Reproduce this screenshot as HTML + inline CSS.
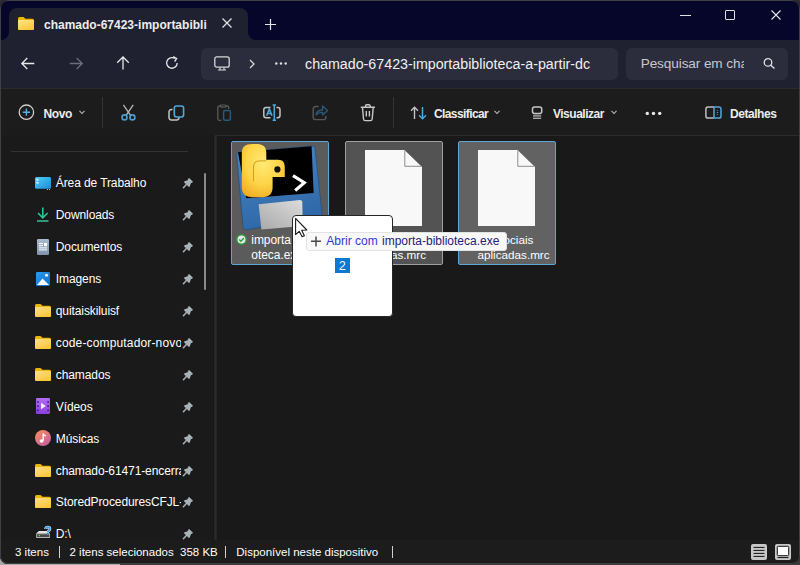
<!DOCTYPE html>
<html><head><meta charset="utf-8"><style>
*{margin:0;padding:0;box-sizing:border-box}
html,body{width:800px;height:565px;overflow:hidden;background:#2a2a2a;font-family:"Liberation Sans",sans-serif;color:#fff}
.abs{position:absolute}
.t{position:absolute;white-space:nowrap}
svg{position:absolute;overflow:visible}
</style></head><body>
<div class="abs" style="left:0;top:0;width:800px;height:565px;background:#3a3a3a"></div>
<div class="abs" style="left:0;top:0;width:800px;height:40px;background:#2e2e2e"></div>
<div class="abs" style="left:0;top:120px;width:2px;height:445px;background:linear-gradient(#3c4250,#4a4e58 70%,#a8a8a8 78%)"></div>
<div class="abs" style="left:0;top:556px;width:120px;height:9px;background:#a8a8a8"></div>
<div class="abs" id="win" style="left:0;top:0;width:800px;height:564px;border-radius:8px;overflow:hidden;background:#191919">
<div class="abs" style="left:0;top:0;width:800px;height:40px;background:#05062a"></div>
<div class="abs" style="left:9px;top:8px;width:239px;height:33px;background:#1f2030;border-radius:8px 8px 0 0"></div>
<svg style="left:1px;top:32px" width="8" height="8"><path d="M8 0 V8 H0 A8 8 0 0 0 8 0Z" fill="#1f2030"/></svg>
<svg style="left:248px;top:32px" width="8" height="8"><path d="M0 0 V8 H8 A8 8 0 0 1 0 0Z" fill="#1f2030"/></svg>
<div class="abs" style="left:0;top:40px;width:800px;height:48px;background:#1f2030"></div>
<div class="abs" style="left:201px;top:48px;width:417px;height:32px;background:#2b2c3c;border-radius:6px"></div>
<div class="abs" style="left:626px;top:48px;width:162px;height:32px;background:#2b2c3c;border-radius:6px"></div>
<div class="abs" style="left:0;top:88px;width:800px;height:47px;background:#1c1c1c;border-top:1px solid #2b2b2b"></div>
<div class="abs" style="left:0;top:135px;width:800px;height:1px;background:#2c2c2c"></div>
<div class="abs" style="left:102px;top:97px;width:1px;height:31px;background:#333"></div>
<div class="abs" style="left:393px;top:97px;width:1px;height:31px;background:#333"></div>
<div class="abs" style="left:0;top:135px;width:215px;height:405px;background:#1a1a1a"></div>
<div class="abs" style="left:11px;top:151px;width:177px;height:1px;background:#333"></div>
<div class="abs" style="left:213px;top:136px;width:1px;height:404px;background:#161616"></div>
<div class="abs" style="left:214px;top:136px;width:3px;height:404px;background:linear-gradient(90deg,#242424,#2b2b2b,#232323)"></div>
<div class="abs" style="left:204px;top:173px;width:2px;height:117px;background:#8a8a8a;border-radius:1px"></div>
<div class="abs" style="left:0;top:540px;width:800px;height:25px;background:#1c1c1c"></div>
<svg style="left:18px;top:17px" width="16" height="13" viewBox="0 0 16 13"><path d="M0 1.5 Q0 0 1.5 0 H5.5 L7.5 1.8 H14.5 Q16 1.8 16 3.3 V11.5 Q16 13 14.5 13 H1.5 Q0 13 0 11.5Z" fill="#f2b600"/><defs><linearGradient id="gft" x1="0" y1="0" x2="0.6" y2="1"><stop offset="0" stop-color="#ffe592"/><stop offset="1" stop-color="#fcc63a"/></linearGradient></defs><path d="M0 4 Q0 3 1.2 3 H14.8 Q16 3 16 4.2 V11.5 Q16 13 14.5 13 H1.5 Q0 13 0 11.5Z" fill="url(#gft)"/></svg>
<div class="t" style="left:44px;top:18.54px;font-size:12px;line-height:12px;color:#ececec;font-weight:700;letter-spacing:0px;">chamado-67423-importabibli</div>

<svg style="left:222px;top:18px" width="10" height="10"><path d="M0.5 0.5 L9.5 9.5 M9.5 0.5 L0.5 9.5" stroke="#e6e6e6" stroke-width="1.2"/></svg>
<svg style="left:265px;top:19px" width="11" height="11"><path d="M5.5 0 V11 M0 5.5 H11" stroke="#e6e6e6" stroke-width="1.2"/></svg>
<div class="abs" style="left:680px;top:15px;width:11px;height:1px;background:#e0e0e0"></div>
<div class="abs" style="left:725px;top:10px;width:10px;height:10px;border:1px solid #e0e0e0;border-radius:1px"></div>
<svg style="left:771px;top:10px" width="10" height="10"><path d="M0.5 0.5 L9.5 9.5 M9.5 0.5 L0.5 9.5" stroke="#e6e6e6" stroke-width="1.1"/></svg>
<svg style="left:21px;top:57px" width="14" height="13"><path d="M13.3 6.5 H1 M6.3 1 L0.8 6.5 L6.3 12" stroke="#e8e8e8" stroke-width="1.3" fill="none"/></svg>
<svg style="left:69px;top:57px" width="14" height="13"><path d="M0.7 6.5 H13 M7.7 1 L13.2 6.5 L7.7 12" stroke="#6e6e78" stroke-width="1.3" fill="none"/></svg>
<svg style="left:116px;top:56px" width="14" height="14"><path d="M7 13.5 V1 M1.2 6.8 L7 1 L12.8 6.8" stroke="#e8e8e8" stroke-width="1.3" fill="none"/></svg>
<svg style="left:165px;top:56px" width="14" height="14"><path d="M12.2 7 A5.3 5.3 0 1 1 9.8 2.5" stroke="#e8e8e8" stroke-width="1.3" fill="none"/><path d="M8.2 0.6 L11.6 2.4 L9.6 5.6" stroke="#e8e8e8" stroke-width="1.3" fill="none"/></svg>
<svg style="left:214px;top:56px" width="16" height="16"><rect x="0.8" y="0.8" width="14.4" height="10.4" rx="2" stroke="#d8d8d8" stroke-width="1.3" fill="none"/><path d="M6 11.5 V13.5 M10 11.5 V13.5 M4 14 H12" stroke="#d8d8d8" stroke-width="1.2"/></svg>
<svg style="left:249px;top:59px" width="7" height="10"><path d="M1 1 L5 5 L1 9" stroke="#d8d8d8" stroke-width="1.3" fill="none"/></svg>
<svg style="left:275px;top:62px" width="12" height="3"><circle cx="1.3" cy="1.5" r="1.2" fill="#e0e0e0"/><circle cx="6" cy="1.5" r="1.2" fill="#e0e0e0"/><circle cx="10.7" cy="1.5" r="1.2" fill="#e0e0e0"/></svg>
<div class="t" style="left:305px;top:56.94px;font-size:14.25px;line-height:14.25px;color:#f0f0f0;font-weight:400;letter-spacing:0px;">chamado-67423-importabiblioteca-a-partir-dc</div>

<div class="abs" style="left:0;top:0;width:744px;height:90px;overflow:hidden"><div class="t" style="left:640.7px;top:57.49px;font-size:13.6px;line-height:13.6px;color:#c8c8cc;font-weight:400;letter-spacing:-0.1px;">Pesquisar em cha</div>
</div>
<svg style="left:763px;top:58.2px" width="13" height="11"><circle cx="5" cy="4.4" r="3.8" stroke="#e0e0e0" stroke-width="1.3" fill="none"/><path d="M7.8 7.2 L11.5 10.5" stroke="#e0e0e0" stroke-width="1.4"/></svg>
<svg style="left:18px;top:104px" width="17" height="17"><circle cx="8.4" cy="8.2" r="7.2" stroke="#d0d0d0" stroke-width="1.3" fill="none"/><path d="M8.4 4.6 V11.8 M4.8 8.2 H12" stroke="#4fb4ec" stroke-width="1.4"/></svg>
<div class="t" style="left:43.5px;top:107.84px;font-size:12px;line-height:12px;color:#ececec;font-weight:700;letter-spacing:-0.4px;">Novo</div>

<svg style="left:79px;top:109.8px" width="6" height="5"><path d="M0.5 0.8 L3 3.5 L5.5 0.8" stroke="#bbb" stroke-width="1.1" fill="none"/></svg>
<svg style="left:121px;top:104px" width="16" height="18"><path d="M2.4 0.9 L9.6 11.4 M12.2 0.9 L5.1 11.4" stroke="#b8b8b8" stroke-width="1.3"/><circle cx="3.5" cy="13.4" r="2.5" stroke="#4b9fd0" stroke-width="1.6" fill="none"/><circle cx="11.4" cy="13.4" r="2.5" stroke="#4b9fd0" stroke-width="1.6" fill="none"/></svg>
<svg style="left:168px;top:104px" width="17" height="17"><path d="M4.5 5.5 H3.3 A2.3 2.3 0 0 0 1 7.8 V13.6 A2.3 2.3 0 0 0 3.3 15.9 H8.8 A2.3 2.3 0 0 0 11.1 13.6 V13.2" stroke="#c4c4c4" stroke-width="1.5" fill="none"/><rect x="6.3" y="2" width="9.3" height="11" rx="2.2" stroke="#4fa8dc" stroke-width="1.6" fill="none"/></svg>
<svg style="left:217px;top:104px" width="16" height="18"><path d="M3.3 2 H2.3 A1.5 1.5 0 0 0 0.8 3.5 V14.8 A1.5 1.5 0 0 0 2.3 16.3 H4.3 M8.9 2 H10.2 A1.5 1.5 0 0 1 11.7 3.5 V5" stroke="#5a5a5a" stroke-width="1.3" fill="none"/><rect x="3.3" y="1" width="5.6" height="2.1" rx="1" stroke="#5a5a5a" stroke-width="1.2" fill="none"/><rect x="6.6" y="6.4" width="6.8" height="9.8" rx="1.5" stroke="#2a5a7a" stroke-width="1.5" fill="none"/></svg>
<svg style="left:263px;top:104px" width="18" height="18"><path d="M7.5 3.5 H3 A2.2 2.2 0 0 0 0.8 5.7 V11.6 A2.2 2.2 0 0 0 3 13.8 H7.5 M13.5 3.5 H14.8 A2.2 2.2 0 0 1 17 5.7 V11.6 A2.2 2.2 0 0 1 14.8 13.8 H13.5" stroke="#c4c4c4" stroke-width="1.5" fill="none"/><path d="M3.6 11.8 L6.3 5 L9 11.8 M4.6 9.5 H8" stroke="#4fa8dc" stroke-width="1.6" fill="none"/><path d="M11.3 1 V16.3 M9.6 1 H13 M9.6 16.3 H13" stroke="#4fa8dc" stroke-width="1.5"/></svg>
<svg style="left:312px;top:105px" width="17" height="16"><path d="M6.6 1.5 H3.5 A2.3 2.3 0 0 0 1.2 3.8 V12.3 A2.3 2.3 0 0 0 3.5 14.6 H11.6 A2.3 2.3 0 0 0 13.9 12.3 V10.9" stroke="#585858" stroke-width="1.4" fill="none"/><path d="M4 9.9 Q4.5 5.4 10.5 5 V1 L15.6 5.6 L10.7 10 V7.4 Q6.2 7.4 4 9.9Z" stroke="#2a5878" stroke-width="1.3" fill="none" stroke-linejoin="round"/></svg>
<svg style="left:360px;top:104px" width="16" height="18"><path d="M0.8 3.3 H15 M5.5 3.3 V2 A1.2 1.2 0 0 1 6.7 0.8 H9 A1.2 1.2 0 0 1 10.2 2 V3.3 M2.5 3.5 L3.5 15 A1.8 1.8 0 0 0 5.3 16.6 H10.4 A1.8 1.8 0 0 0 12.2 15 L13.2 3.5" stroke="#c8c8c8" stroke-width="1.4" fill="none"/><path d="M6.3 7 V12.5 M9.4 7 V12.5" stroke="#c8c8c8" stroke-width="1.4"/></svg>
<svg style="left:410px;top:106px" width="18" height="14"><path d="M4.5 13 V1.3 M1 4.8 L4.5 1.3 L8 4.8" stroke="#c4c4c4" stroke-width="1.4" fill="none"/><path d="M12.5 1 V12.7 M9 9.2 L12.5 12.7 L16 9.2" stroke="#4fa8dc" stroke-width="1.5" fill="none"/></svg>
<div class="t" style="left:434px;top:107.84px;font-size:12px;line-height:12px;color:#ececec;font-weight:700;letter-spacing:-0.6px;">Classificar</div>

<svg style="left:494px;top:109.8px" width="6" height="5"><path d="M0.5 0.8 L3 3.5 L5.5 0.8" stroke="#bbb" stroke-width="1.1" fill="none"/></svg>
<svg style="left:531px;top:106px" width="12" height="13"><rect x="1.5" y="0.9" width="9.2" height="6.6" rx="2" stroke="#c8c8c8" stroke-width="1.5" fill="none"/><path d="M2 9.3 H10.2 M2 10.9 H10.2 M2 12.5 H10.2" stroke="#a8a8a8" stroke-width="1"/></svg>
<div class="t" style="left:553px;top:107.84px;font-size:12px;line-height:12px;color:#ececec;font-weight:700;letter-spacing:-0.5px;">Visualizar</div>

<svg style="left:611px;top:109.8px" width="6" height="5"><path d="M0.5 0.8 L3 3.5 L5.5 0.8" stroke="#bbb" stroke-width="1.1" fill="none"/></svg>
<svg style="left:645px;top:111px" width="18" height="4"><circle cx="2.3" cy="2.4" r="1.7" fill="#ececec"/><circle cx="8.5" cy="2.4" r="1.7" fill="#ececec"/><circle cx="14.7" cy="2.4" r="1.7" fill="#ececec"/></svg>
<svg style="left:705px;top:106px" width="17" height="13"><path d="M9 0.9 H3 A2.2 2.2 0 0 0 0.9 3.1 V9.9 A2.2 2.2 0 0 0 3 12.1 H9" stroke="#bdbdbd" stroke-width="1.5" fill="none"/><path d="M9 0.9 H13.8 A2.2 2.2 0 0 1 16 3.1 V9.9 A2.2 2.2 0 0 1 13.8 12.1 H9 Z" stroke="#4fa8dc" stroke-width="1.5" fill="none"/><path d="M12.5 4 V4.8 M12.5 6.1 V6.9 M12.5 8.2 V9" stroke="#4fa8dc" stroke-width="1.2"/></svg>
<div class="t" style="left:730px;top:107.84px;font-size:12px;line-height:12px;color:#ececec;font-weight:700;letter-spacing:-0.45px;">Detalhes</div>

<div class="t" style="left:55.8px;top:177.44px;font-size:12px;line-height:12px;color:#fff;font-weight:400;letter-spacing:-0.1px;">Área de Trabalho</div>

<div class="t" style="left:55.8px;top:209.44px;font-size:12px;line-height:12px;color:#fff;font-weight:400;letter-spacing:-0.1px;">Downloads</div>

<div class="t" style="left:55.8px;top:241.44px;font-size:12px;line-height:12px;color:#fff;font-weight:400;letter-spacing:-0.1px;">Documentos</div>

<div class="t" style="left:55.8px;top:273.44px;font-size:12px;line-height:12px;color:#fff;font-weight:400;letter-spacing:-0.1px;">Imagens</div>

<div class="t" style="left:55.8px;top:305.44px;font-size:12px;line-height:12px;color:#fff;font-weight:400;letter-spacing:-0.1px;">quitaiskiluisf</div>

<div class="t" style="left:55.8px;top:337.44px;font-size:12px;line-height:12px;color:#fff;font-weight:400;letter-spacing:0.15px;">code-computador-novo</div>

<div class="t" style="left:55.8px;top:368.94px;font-size:12px;line-height:12px;color:#fff;font-weight:400;letter-spacing:-0.1px;">chamados</div>

<div class="t" style="left:55.8px;top:400.94px;font-size:12px;line-height:12px;color:#fff;font-weight:400;letter-spacing:-0.1px;">Vídeos</div>

<div class="t" style="left:55.8px;top:432.94px;font-size:12px;line-height:12px;color:#fff;font-weight:400;letter-spacing:-0.1px;">Músicas</div>

<div class="t" style="left:55.8px;top:464.94px;font-size:12px;line-height:12px;color:#fff;font-weight:400;letter-spacing:-0.1px;">chamado-61471-encerra</div>

<div class="t" style="left:55.8px;top:496.44px;font-size:12px;line-height:12px;color:#fff;font-weight:400;letter-spacing:-0.1px;">StoredProceduresCFJL-t</div>

<div class="t" style="left:55.8px;top:528.44px;font-size:12px;line-height:12px;color:#fff;font-weight:400;letter-spacing:-0.1px;">D:\</div>

<div class="abs" style="left:181px;top:330px;width:22px;height:190px;background:#1a1a1a"></div>
<svg style="left:180px;top:175px" width="16" height="16" viewBox="0 0 16 16"><path d="M8.6 3.2 Q9 2.9 9.4 3.2 L12.8 6.6 Q13.1 7 12.7 7.3 L10.9 8.3 L9.6 11.8 Q9.3 12.3 8.9 11.9 L4 7.2 Q3.6 6.8 4.1 6.5 L7.5 5.2Z" fill="#a6b1b8"/><path d="M6.4 9.6 L3.4 12.7" stroke="#a6b1b8" stroke-width="1.5" stroke-linecap="round"/></svg>
<svg style="left:180px;top:207px" width="16" height="16" viewBox="0 0 16 16"><path d="M8.6 3.2 Q9 2.9 9.4 3.2 L12.8 6.6 Q13.1 7 12.7 7.3 L10.9 8.3 L9.6 11.8 Q9.3 12.3 8.9 11.9 L4 7.2 Q3.6 6.8 4.1 6.5 L7.5 5.2Z" fill="#a6b1b8"/><path d="M6.4 9.6 L3.4 12.7" stroke="#a6b1b8" stroke-width="1.5" stroke-linecap="round"/></svg>
<svg style="left:180px;top:239px" width="16" height="16" viewBox="0 0 16 16"><path d="M8.6 3.2 Q9 2.9 9.4 3.2 L12.8 6.6 Q13.1 7 12.7 7.3 L10.9 8.3 L9.6 11.8 Q9.3 12.3 8.9 11.9 L4 7.2 Q3.6 6.8 4.1 6.5 L7.5 5.2Z" fill="#a6b1b8"/><path d="M6.4 9.6 L3.4 12.7" stroke="#a6b1b8" stroke-width="1.5" stroke-linecap="round"/></svg>
<svg style="left:180px;top:271px" width="16" height="16" viewBox="0 0 16 16"><path d="M8.6 3.2 Q9 2.9 9.4 3.2 L12.8 6.6 Q13.1 7 12.7 7.3 L10.9 8.3 L9.6 11.8 Q9.3 12.3 8.9 11.9 L4 7.2 Q3.6 6.8 4.1 6.5 L7.5 5.2Z" fill="#a6b1b8"/><path d="M6.4 9.6 L3.4 12.7" stroke="#a6b1b8" stroke-width="1.5" stroke-linecap="round"/></svg>
<svg style="left:180px;top:303px" width="16" height="16" viewBox="0 0 16 16"><path d="M8.6 3.2 Q9 2.9 9.4 3.2 L12.8 6.6 Q13.1 7 12.7 7.3 L10.9 8.3 L9.6 11.8 Q9.3 12.3 8.9 11.9 L4 7.2 Q3.6 6.8 4.1 6.5 L7.5 5.2Z" fill="#a6b1b8"/><path d="M6.4 9.6 L3.4 12.7" stroke="#a6b1b8" stroke-width="1.5" stroke-linecap="round"/></svg>
<svg style="left:180px;top:335px" width="16" height="16" viewBox="0 0 16 16"><path d="M8.6 3.2 Q9 2.9 9.4 3.2 L12.8 6.6 Q13.1 7 12.7 7.3 L10.9 8.3 L9.6 11.8 Q9.3 12.3 8.9 11.9 L4 7.2 Q3.6 6.8 4.1 6.5 L7.5 5.2Z" fill="#a6b1b8"/><path d="M6.4 9.6 L3.4 12.7" stroke="#a6b1b8" stroke-width="1.5" stroke-linecap="round"/></svg>
<svg style="left:180px;top:366.5px" width="16" height="16" viewBox="0 0 16 16"><path d="M8.6 3.2 Q9 2.9 9.4 3.2 L12.8 6.6 Q13.1 7 12.7 7.3 L10.9 8.3 L9.6 11.8 Q9.3 12.3 8.9 11.9 L4 7.2 Q3.6 6.8 4.1 6.5 L7.5 5.2Z" fill="#a6b1b8"/><path d="M6.4 9.6 L3.4 12.7" stroke="#a6b1b8" stroke-width="1.5" stroke-linecap="round"/></svg>
<svg style="left:180px;top:398.5px" width="16" height="16" viewBox="0 0 16 16"><path d="M8.6 3.2 Q9 2.9 9.4 3.2 L12.8 6.6 Q13.1 7 12.7 7.3 L10.9 8.3 L9.6 11.8 Q9.3 12.3 8.9 11.9 L4 7.2 Q3.6 6.8 4.1 6.5 L7.5 5.2Z" fill="#a6b1b8"/><path d="M6.4 9.6 L3.4 12.7" stroke="#a6b1b8" stroke-width="1.5" stroke-linecap="round"/></svg>
<svg style="left:180px;top:430.5px" width="16" height="16" viewBox="0 0 16 16"><path d="M8.6 3.2 Q9 2.9 9.4 3.2 L12.8 6.6 Q13.1 7 12.7 7.3 L10.9 8.3 L9.6 11.8 Q9.3 12.3 8.9 11.9 L4 7.2 Q3.6 6.8 4.1 6.5 L7.5 5.2Z" fill="#a6b1b8"/><path d="M6.4 9.6 L3.4 12.7" stroke="#a6b1b8" stroke-width="1.5" stroke-linecap="round"/></svg>
<svg style="left:180px;top:462.5px" width="16" height="16" viewBox="0 0 16 16"><path d="M8.6 3.2 Q9 2.9 9.4 3.2 L12.8 6.6 Q13.1 7 12.7 7.3 L10.9 8.3 L9.6 11.8 Q9.3 12.3 8.9 11.9 L4 7.2 Q3.6 6.8 4.1 6.5 L7.5 5.2Z" fill="#a6b1b8"/><path d="M6.4 9.6 L3.4 12.7" stroke="#a6b1b8" stroke-width="1.5" stroke-linecap="round"/></svg>
<svg style="left:180px;top:494px" width="16" height="16" viewBox="0 0 16 16"><path d="M8.6 3.2 Q9 2.9 9.4 3.2 L12.8 6.6 Q13.1 7 12.7 7.3 L10.9 8.3 L9.6 11.8 Q9.3 12.3 8.9 11.9 L4 7.2 Q3.6 6.8 4.1 6.5 L7.5 5.2Z" fill="#a6b1b8"/><path d="M6.4 9.6 L3.4 12.7" stroke="#a6b1b8" stroke-width="1.5" stroke-linecap="round"/></svg>
<svg style="left:180px;top:526px" width="16" height="16" viewBox="0 0 16 16"><path d="M8.6 3.2 Q9 2.9 9.4 3.2 L12.8 6.6 Q13.1 7 12.7 7.3 L10.9 8.3 L9.6 11.8 Q9.3 12.3 8.9 11.9 L4 7.2 Q3.6 6.8 4.1 6.5 L7.5 5.2Z" fill="#a6b1b8"/><path d="M6.4 9.6 L3.4 12.7" stroke="#a6b1b8" stroke-width="1.5" stroke-linecap="round"/></svg>
<svg style="left:35px;top:177px" width="16" height="13"><defs><linearGradient id="gd" x1="0" y1="0" x2="1" y2="1"><stop offset="0" stop-color="#4fd0f5"/><stop offset="1" stop-color="#1a8ad8"/></linearGradient></defs><rect x="0" y="0" width="16" height="11.8" rx="1.5" fill="url(#gd)"/><rect x="1.5" y="2" width="2" height="1.6" fill="#fff" opacity=".9"/><rect x="1.5" y="5" width="2" height="1.6" fill="#fff" opacity=".9"/><rect x="12" y="12" width="1" height="1" fill="#bbb"/><rect x="14" y="12" width="1" height="1" fill="#bbb"/></svg>
<svg style="left:37px;top:207px" width="12" height="15"><path d="M5.8 0.5 V10.5 M1 6 L5.8 10.8 L10.6 6" stroke="#2ec49a" stroke-width="1.6" fill="none"/><path d="M0 14 H11.5" stroke="#2ec49a" stroke-width="1.6"/></svg>
<svg style="left:37px;top:239px" width="12" height="16"><defs><linearGradient id="gdoc" x1="0" y1="0" x2="0" y2="1"><stop offset="0" stop-color="#a9bccf"/><stop offset="1" stop-color="#7d94ab"/></linearGradient></defs><rect x="0" y="0" width="12" height="16" rx="1.3" fill="url(#gdoc)"/><path d="M2 4.6 H6 M2 6.7 H6 M2 8.9 H10 M2 10.9 H10" stroke="#fff" stroke-width="1"/><rect x="7" y="4" width="3" height="3.2" fill="#fff"/></svg>
<svg style="left:36px;top:272px" width="14" height="14"><defs><linearGradient id="gim" x1="0" y1="0" x2="1" y2="1"><stop offset="0" stop-color="#2a9cf0"/><stop offset="1" stop-color="#0d6fcc"/></linearGradient></defs><rect x="0" y="0" width="14" height="14" rx="1.3" fill="url(#gim)"/><path d="M1 13 L6.5 6.5 L13 13Z" fill="#fff"/><circle cx="10.5" cy="3.3" r="1.5" fill="#fff"/></svg>
<svg style="left:35px;top:304px" width="16" height="13" viewBox="0 0 16 13"><path d="M0 1.5 Q0 0 1.5 0 H5.5 L7.5 1.8 H14.5 Q16 1.8 16 3.3 V11.5 Q16 13 14.5 13 H1.5 Q0 13 0 11.5Z" fill="#f2b600"/><defs><linearGradient id="gf0" x1="0" y1="0" x2="0.6" y2="1"><stop offset="0" stop-color="#ffe08a"/><stop offset="1" stop-color="#fcc63a"/></linearGradient></defs><path d="M0 4 Q0 3 1.2 3 H14.8 Q16 3 16 4.2 V11.5 Q16 13 14.5 13 H1.5 Q0 13 0 11.5Z" fill="url(#gf0)"/></svg>
<svg style="left:35px;top:336px" width="16" height="13" viewBox="0 0 16 13"><path d="M0 1.5 Q0 0 1.5 0 H5.5 L7.5 1.8 H14.5 Q16 1.8 16 3.3 V11.5 Q16 13 14.5 13 H1.5 Q0 13 0 11.5Z" fill="#f2b600"/><defs><linearGradient id="gf1" x1="0" y1="0" x2="0.6" y2="1"><stop offset="0" stop-color="#ffe08a"/><stop offset="1" stop-color="#fcc63a"/></linearGradient></defs><path d="M0 4 Q0 3 1.2 3 H14.8 Q16 3 16 4.2 V11.5 Q16 13 14.5 13 H1.5 Q0 13 0 11.5Z" fill="url(#gf1)"/></svg>
<svg style="left:35px;top:367.5px" width="16" height="13" viewBox="0 0 16 13"><path d="M0 1.5 Q0 0 1.5 0 H5.5 L7.5 1.8 H14.5 Q16 1.8 16 3.3 V11.5 Q16 13 14.5 13 H1.5 Q0 13 0 11.5Z" fill="#f2b600"/><defs><linearGradient id="gf2" x1="0" y1="0" x2="0.6" y2="1"><stop offset="0" stop-color="#ffe08a"/><stop offset="1" stop-color="#fcc63a"/></linearGradient></defs><path d="M0 4 Q0 3 1.2 3 H14.8 Q16 3 16 4.2 V11.5 Q16 13 14.5 13 H1.5 Q0 13 0 11.5Z" fill="url(#gf2)"/></svg>
<svg style="left:35px;top:463.5px" width="16" height="13" viewBox="0 0 16 13"><path d="M0 1.5 Q0 0 1.5 0 H5.5 L7.5 1.8 H14.5 Q16 1.8 16 3.3 V11.5 Q16 13 14.5 13 H1.5 Q0 13 0 11.5Z" fill="#f2b600"/><defs><linearGradient id="gf3" x1="0" y1="0" x2="0.6" y2="1"><stop offset="0" stop-color="#ffe08a"/><stop offset="1" stop-color="#fcc63a"/></linearGradient></defs><path d="M0 4 Q0 3 1.2 3 H14.8 Q16 3 16 4.2 V11.5 Q16 13 14.5 13 H1.5 Q0 13 0 11.5Z" fill="url(#gf3)"/></svg>
<svg style="left:35px;top:495px" width="16" height="13" viewBox="0 0 16 13"><path d="M0 1.5 Q0 0 1.5 0 H5.5 L7.5 1.8 H14.5 Q16 1.8 16 3.3 V11.5 Q16 13 14.5 13 H1.5 Q0 13 0 11.5Z" fill="#f2b600"/><defs><linearGradient id="gf4" x1="0" y1="0" x2="0.6" y2="1"><stop offset="0" stop-color="#ffe08a"/><stop offset="1" stop-color="#fcc63a"/></linearGradient></defs><path d="M0 4 Q0 3 1.2 3 H14.8 Q16 3 16 4.2 V11.5 Q16 13 14.5 13 H1.5 Q0 13 0 11.5Z" fill="url(#gf4)"/></svg>
<svg style="left:36px;top:398px" width="14" height="16"><defs><linearGradient id="gv" x1="0" y1="0" x2="0" y2="1"><stop offset="0" stop-color="#b46cf2"/><stop offset="1" stop-color="#8a3ee0"/></linearGradient></defs><rect x="0" y="0" width="14" height="16" rx="1.2" fill="url(#gv)"/><g fill="#4a2080"><rect x="1" y="3" width="1.8" height="1.8" rx=".5"/><rect x="1" y="7.2" width="1.8" height="1.8" rx=".5"/><rect x="1" y="11.4" width="1.8" height="1.8" rx=".5"/><rect x="11.2" y="3" width="1.8" height="1.8" rx=".5"/><rect x="11.2" y="7.2" width="1.8" height="1.8" rx=".5"/><rect x="11.2" y="11.4" width="1.8" height="1.8" rx=".5"/></g><path d="M5 4.8 L9.8 8 L5 11.2Z" fill="#f4ecff"/></svg>
<svg style="left:35px;top:430px" width="16" height="16"><defs><linearGradient id="gm" x1="0" y1="0" x2="0.7" y2="1"><stop offset="0" stop-color="#f5925a"/><stop offset="1" stop-color="#c8609c"/></linearGradient></defs><circle cx="8" cy="8" r="8" fill="url(#gm)"/><path d="M8.2 3.5 V10.8 M8.2 3.5 Q9 5.5 10.8 6" stroke="#fff" stroke-width="1.3" fill="none"/><ellipse cx="6.6" cy="11" rx="2" ry="1.7" fill="#fff"/></svg>
<svg style="left:35px;top:525px" width="17" height="14" viewBox="0 0 17 14"><path d="M1.2 8.4 L3.9 6 H12 L14.9 8.4Z" fill="#e4e4e4"/><rect x="1.2" y="8.3" width="13.7" height="4.7" rx="0.6" fill="#c0c0c0"/><rect x="2" y="9.2" width="12.1" height="2.9" fill="#4a4a4a"/><circle cx="4.3" cy="10.6" r=".8" fill="#3ee04a"/><g transform="translate(0 1)"><path d="M10.6 3 Q10.6 1.1 12.8 1.1 Q15 1.1 15 3 Q15 4.3 13.3 5 Q12.7 5.4 12.7 6.4" stroke="#d8e8f4" stroke-width="2.6" fill="none"/><path d="M10.6 3 Q10.6 1.1 12.8 1.1 Q15 1.1 15 3 Q15 4.3 13.3 5 Q12.7 5.4 12.7 6.4" stroke="#3b9de0" stroke-width="1.5" fill="none"/><circle cx="12.7" cy="7.8" r="1" fill="#3b9de0"/></g></svg>
<div class="abs" style="left:231px;top:141px;width:98px;height:124px;background:#5b5b5b;border:1px solid #5aa8d8;border-radius:2px"></div>
<div class="abs" style="left:345px;top:141px;width:98px;height:124px;background:#535353;border:1px solid #a0a0a0;border-radius:2px"></div>
<div class="abs" style="left:458px;top:141px;width:98px;height:124px;background:#626262;border:1px solid #5aa8d8;border-radius:2px"></div>
<svg style="left:232px;top:142px" width="95" height="95" viewBox="0 0 95 95">
<defs><radialGradient id="gsn" cx="0.5" cy="0.35" r="0.75"><stop offset="0" stop-color="#ffea74"/><stop offset="0.55" stop-color="#fdd448"/><stop offset="1" stop-color="#eea820"/></radialGradient>
<linearGradient id="gfl" x1="0" y1="0" x2="0.3" y2="1"><stop offset="0" stop-color="#4a86c4"/><stop offset="1" stop-color="#2f68a8"/></linearGradient>
<linearGradient id="glb" x1="1" y1="0" x2="0" y2="1"><stop offset="0" stop-color="#dcdcdc"/><stop offset="1" stop-color="#a8a8a8"/></linearGradient></defs>
<path d="M4.7 12.9 Q3.8 10.5 6.5 10.2 L80 4 Q82.5 3.8 83 6.5 L90.2 73 Q90.4 75.5 88 75.8 L14 87.8 Q11.5 88.1 11 85.5Z" fill="url(#gfl)" stroke="#24507e" stroke-width=".8"/>
<path d="M6 10.3 L79.6 4.2 L81.6 51 L14.3 56.3Z" fill="#000"/>
<path d="M26.6 62.2 L68 58 Q70 58 70.3 60 L70.8 84 L29.4 87.6 Z" fill="url(#glb)"/>
<path d="M61 33.6 L72.3 40.6 L63.2 48.5" stroke="#fff" stroke-width="3.1" fill="none" stroke-linejoin="miter"/>
<path d="M9.8 11.5 C9.8 4.5 13 1.9 20.5 1.9 H24 C31 1.9 34.3 4.5 34.3 11 V17.8 H46 C51 17.8 52.8 20.5 52.8 25.5 V35 H40.6 V45 C40.6 52 37 55.2 30 55.2 H20.5 C13.5 55.2 9.8 52 9.8 45 Z" fill="url(#gsn)"/>
<path d="M21.5 39.3 V25 Q21.5 18.9 27.4 18.9 H34.3" stroke="#c9980e" stroke-width=".9" fill="none"/>
<circle cx="45.4" cy="27.4" r="3.1" fill="#111"/>
</svg>
<svg style="left:236px;top:234px" width="11" height="11"><circle cx="5.5" cy="5.5" r="4.7" fill="#e6e6e6" stroke="#2f9a3c" stroke-width="1.5"/><path d="M3.2 5.6 L4.9 7.2 L7.9 4.1" stroke="#2f9a3c" stroke-width="1.4" fill="none"/></svg>
<div class="t" style="left:251.3px;top:233.64px;font-size:12px;line-height:12px;color:#fff;font-weight:400;letter-spacing:-0.05px;">importa</div>

<div class="t" style="left:251.3px;top:248.54px;font-size:12px;line-height:12px;color:#fff;font-weight:400;letter-spacing:-0.05px;">oteca.ex</div>

<svg style="left:365px;top:150px" width="58" height="77" viewBox="0 0 58 77"><path d="M0 0 H39.5 L57 17 V76 H0Z" fill="#f8f8f8"/><path d="M39.8 0.5 V16.3 H56.5" fill="none" stroke="#8c8c8c" stroke-width="1"/></svg>
<svg style="left:478px;top:150px" width="58" height="77" viewBox="0 0 58 77"><path d="M0 0 H39.5 L57 17 V76 H0Z" fill="#f8f8f8"/><path d="M39.8 0.5 V16.3 H56.5" fill="none" stroke="#8c8c8c" stroke-width="1"/></svg>
<div class="t" style="left:391px;top:248.80px;font-size:11.7px;line-height:11.7px;color:#fff;font-weight:400;letter-spacing:0px;">as.mrc</div>

<div class="t" style="left:503.5px;top:233.90px;font-size:11.7px;line-height:11.7px;color:#fff;font-weight:400;letter-spacing:0px;">ociais</div>

<div class="t" style="left:477.5px;top:248.80px;font-size:11.7px;line-height:11.7px;color:#fff;font-weight:400;letter-spacing:0px;">aplicadas.mrc</div>

<div class="abs" style="left:292px;top:215px;width:101px;height:102px;background:#fff;border-radius:4px;border:1px solid #262626"></div>
<div class="abs" style="left:335px;top:258px;width:15px;height:15px;background:#0a78d4"></div>
<div class="t" style="left:339px;top:260.17px;font-size:12.2px;line-height:12.2px;color:#fff;font-weight:400;letter-spacing:0px;">2</div>

<div class="abs" style="left:306px;top:231.5px;width:200.5px;height:19px;background:#f9f9f9;border:1px solid #e2e2e2;border-radius:3px"></div>
<svg style="left:311px;top:236px" width="11" height="11"><path d="M5 0.5 V10.5 M0 5.2 H10" stroke="#484848" stroke-width="1.5"/></svg>
<div class="t" style="left:326.3px;top:234.84px;font-size:12px;line-height:12px;color:#3636d4;font-weight:400;letter-spacing:0px;">Abrir com</div>

<div class="t" style="left:382px;top:234.84px;font-size:12px;line-height:12px;color:#24207e;font-weight:400;letter-spacing:0px;">importa-biblioteca.exe</div>

<svg style="left:294px;top:217px" width="16" height="22" viewBox="0 0 16 22"><path d="M1.6 1.4 V17.6 L5.2 14.3 L8.1 19.8 L10.4 18.7 L7.7 13.3 L12.8 13Z" fill="#fff" stroke="#1a1a1a" stroke-width="1.1" stroke-linejoin="round"/></svg>
<div class="t" style="left:15px;top:546.57px;font-size:11.5px;line-height:11.5px;color:#fff;font-weight:400;letter-spacing:0px;">3 itens</div>

<div class="abs" style="left:59px;top:546px;width:1px;height:12px;background:#cfcfcf"></div>
<div class="t" style="left:69.5px;top:546.57px;font-size:11.5px;line-height:11.5px;color:#fff;font-weight:400;letter-spacing:0px;">2 itens selecionados</div>

<div class="t" style="left:180px;top:546.57px;font-size:11.5px;line-height:11.5px;color:#fff;font-weight:400;letter-spacing:0px;">358 KB</div>

<div class="abs" style="left:225px;top:546px;width:1px;height:12px;background:#cfcfcf"></div>
<div class="t" style="left:236.3px;top:546.57px;font-size:11.5px;line-height:11.5px;color:#fff;font-weight:400;letter-spacing:0px;">Disponível neste dispositivo</div>

<div class="abs" style="left:391.5px;top:546px;width:1px;height:12px;background:#cfcfcf"></div>
<svg style="left:751px;top:544px" width="16" height="16"><rect x="0" y="0" width="16" height="16" rx="2" fill="#c8c8c8"/><path d="M2.5 3.4 H13.5 M2.5 6.4 H13.5 M2.5 9.4 H13.5 M2.5 12.4 H13.5" stroke="#111" stroke-width="1"/></svg>
<svg style="left:775px;top:544px" width="16" height="16"><rect x="0" y="0" width="16" height="16" rx="2" fill="#c8c8c8"/><rect x="2.3" y="2.3" width="11.4" height="9.4" rx="1" fill="#fff" stroke="#111" stroke-width="1"/><path d="M2.5 13.6 H13.5" stroke="#111" stroke-width="1"/></svg>
</div>
<div class="abs" style="left:0;top:0;width:800px;height:564px;border:1px solid #404040;border-radius:8px;"></div>
</body></html>
